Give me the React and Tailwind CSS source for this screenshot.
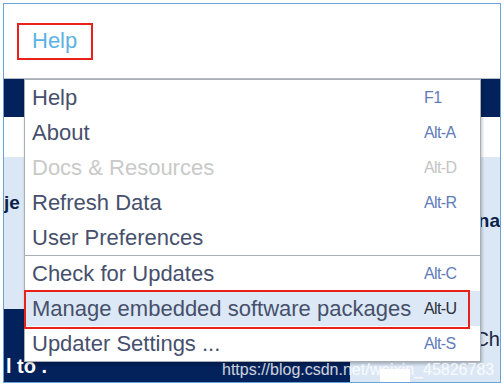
import React from "react";

const items = [
  { label: "Help", key: "F1" },
  { label: "About", key: "Alt-A" },
  { label: "Docs & Resources", key: "Alt-D", disabled: true },
  { label: "Refresh Data", key: "Alt-R" },
  { label: "User Preferences", key: "" },
  { sep: true },
  { label: "Check for Updates", key: "Alt-C" },
  { label: "Manage embedded software packages", key: "Alt-U", active: true },
  { label: "Updater Settings ...", key: "Alt-S" },
];

export default function App() {
  return (
    <div
      className="w-[504px] h-[386px] bg-white p-[3px] overflow-hidden"
      style={{ fontFamily: '"Liberation Sans", Arial, sans-serif' }}
    >
      <div className="relative w-[498px] h-[380px] border border-[#6aa3d8] flex flex-col overflow-hidden">
        {/* header */}
        <div className="h-[75px] bg-white border-b border-[#b8bcc4] flex items-center pl-[13px]">
          <div className="border-2 border-[#e8211b] h-[37px] w-[76px] flex items-center pl-[13px] pb-[1px]">
            <span className="text-[22px] text-[#5cb2e2] leading-none">Help</span>
          </div>
        </div>
        {/* background body */}
        <div className="flex-1 flex flex-col">
          <div className="h-[38px] bg-[#03215a]" />
          <div className="h-[40px] bg-white" />
          <div className="h-[152px] bg-[#dbe7f5] flex justify-between items-start">
            <span className="mt-[36px] text-[19px] font-bold text-[#0b1f4a] leading-none">je</span>
            <span className="mt-[54px] text-[19px] font-bold text-[#0b1f4a] leading-none">na</span>
          </div>
          <div className="flex-1 flex">
            <div className="w-[346px] bg-[#03215a] flex items-end pb-[6px] pl-[2px]">
              <span className="text-[20px] font-bold text-white leading-none">l to .</span>
            </div>
            <div className="flex-1 bg-[#dbe7f5] relative">
              <div className="absolute right-0 top-[20px] text-[20px] text-[#1a2540] leading-none">Ch</div>
              <div className="absolute left-[30px] bottom-0 w-[30px] h-[13px] bg-white" />
            </div>
          </div>
        </div>

        {/* dropdown menu overlay */}
        <div className="absolute left-[20px] top-[75px] w-[457px] bg-white border border-[#a9adb5] shadow-[1px_2px_3px_rgba(0,0,0,0.25)] flex flex-col">
          {items.map((it, i) =>
            it.sep ? (
              <div key={i} className="h-px bg-[#a9adb5]" />
            ) : (
              <div
                key={i}
                className={
                  "relative h-[35px] flex items-center pl-[7px] " +
                  (it.active ? "bg-[#dce8f5]" : "")
                }
              >
                <span
                  className={
                    "w-[392px] text-[22px] leading-none whitespace-nowrap " +
                    (it.disabled ? "text-[#c9c9c9]" : "text-[#46506c]")
                  }
                >
                  {it.label}
                </span>
                <span
                  className={
                    "text-[16px] leading-none tracking-[-0.6px] " +
                    (it.disabled
                      ? "text-[#c4c4c4]"
                      : it.active
                      ? "text-[#2a2f3a]"
                      : "text-[#5f7cba]")
                  }
                >
                  {it.key}
                </span>
                {it.active && (
                  <div className="absolute -left-px -top-[1px] w-[446px] h-[39px] border-2 border-[#e8211b] pointer-events-none" />
                )}
              </div>
            )
          )}
        </div>

        {/* watermark */}
        <div className="absolute left-[218px] top-[358px] text-[16px] text-white/80 leading-none whitespace-nowrap">
          https://blog.csdn.net/weixin_45826783
        </div>
      </div>
    </div>
  );
}
